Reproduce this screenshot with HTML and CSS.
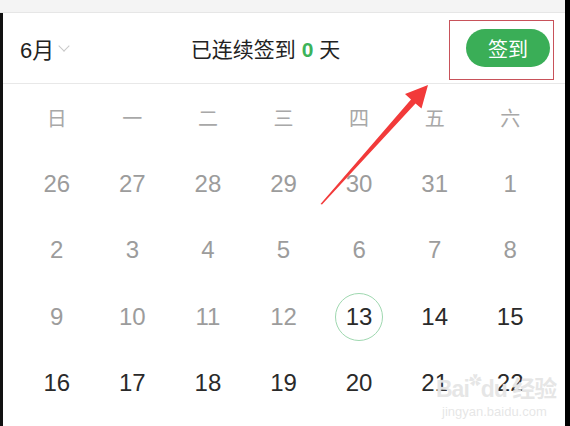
FILE: index.html
```html
<!DOCTYPE html>
<html lang="zh">
<head>
    <meta charset="UTF-8">
    <meta name="viewport" content="width=device-width, initial-scale=1.0">
    <title>签到日历</title>
    <link rel="stylesheet" href="styles.css">
</head>
<body>
    <div class="frame">
        <div class="topbar"></div>
        <div class="main">
            <div class="header">
                <div class="month">6月<span class="chevron"></span></div>
                <div class="title">已连续签到 <b class="count">0</b> 天</div>
                <button class="sign-btn">签到</button>
            </div>

            <div class="calendar">
                <div class="week">日</div>
                <div class="week">一</div>
                <div class="week">二</div>
                <div class="week">三</div>
                <div class="week">四</div>
                <div class="week">五</div>
                <div class="week">六</div>

                <div class="day past">26</div>
                <div class="day past">27</div>
                <div class="day past">28</div>
                <div class="day past">29</div>
                <div class="day past">30</div>
                <div class="day past">31</div>
                <div class="day past">1</div>

                <div class="day past">2</div>
                <div class="day past">3</div>
                <div class="day past">4</div>
                <div class="day past">5</div>
                <div class="day past">6</div>
                <div class="day past">7</div>
                <div class="day past">8</div>

                <div class="day past">9</div>
                <div class="day past">10</div>
                <div class="day past">11</div>
                <div class="day past">12</div>
                <div class="day"><span class="today">13</span></div>
                <div class="day">14</div>
                <div class="day">15</div>

                <div class="day">16</div>
                <div class="day">17</div>
                <div class="day">18</div>
                <div class="day">19</div>
                <div class="day">20</div>
                <div class="day">21</div>
                <div class="day">22</div>
            </div>
        </div>

        <!-- annotation overlays -->
        <div class="mark-box"></div>
        <svg class="arrow" width="570" height="426" viewBox="0 0 570 426">
            <polygon points="428,85 405,94 411,99.5 320.5,204 322,204.5 415.5,103.5 421.5,108.5" fill="#f23a3a"/>
        </svg>
        <div class="watermark">
            <div class="wm-logo">Bai<span class="paw">&#10047;</span>du 经验</div>
            <div class="wm-url">jingyan.baidu.com</div>
        </div>
    </div>
</body>
</html>
```

FILE: styles.css
```css
body {
    margin: 0;
    background: #fff;
    font-family: "Liberation Sans", Arial, "Noto Sans CJK SC", sans-serif;
}
.frame {
    position: relative;
    width: 570px;
    height: 426px;
    border-right: 5px solid #000;
    box-sizing: border-box;
    overflow: hidden;
}
.topbar {
    height: 12px;
    background: #f4f4f4;
    border-bottom: 1px solid #e6e6e6;
}
.main {
    border-left: 3px solid #111;
    height: 413px;
}
.header {
    display: flex;
    align-items: center;
    height: 70px;
    padding: 0 17px;
    border-bottom: 1px solid #e8e8e8;
}
.month {
    width: 53px;
    font-size: 22px;
    color: #222;
    display: flex;
    align-items: center;
}
.chevron {
    width: 7px;
    height: 7px;
    margin-left: 6px;
    margin-top: -5px;
    border-right: 1px solid #c8c8c8;
    border-bottom: 1px solid #c8c8c8;
    transform: rotate(45deg);
}
.title {
    flex: 1;
    text-align: center;
    font-size: 21px;
    color: #222;
    padding-right: 8px;
}
.count {
    color: #3cb35a;
}
.sign-btn {
    width: 84px;
    height: 38px;
    margin-right: -2px;
    border: none;
    border-radius: 19px;
    background: #3aae57;
    color: #fff;
    font-family: inherit;
    font-size: 20px;
    padding: 0;
}
.calendar {
    display: grid;
    grid-template-columns: repeat(7, 1fr);
    grid-auto-rows: 66.5px;
    padding: 0 17px 0 16px;
}
.week, .day {
    display: flex;
    align-items: center;
    justify-content: center;
}
.week {
    font-size: 20px;
    color: #a8a8a8;
}
.day {
    font-size: 24px;
    color: #2a2a2a;
}
.day.past {
    color: #9c9c9c;
}
.today {
    width: 46px;
    height: 46px;
    border: 1px solid #9fd8b0;
    border-radius: 50%;
    display: flex;
    align-items: center;
    justify-content: center;
}
.mark-box {
    position: absolute;
    left: 449px;
    top: 20px;
    width: 103px;
    height: 58px;
    border: 1px solid #c8525a;
}
.arrow {
    position: absolute;
    left: 0;
    top: 0;
}
.watermark {
    position: absolute;
    left: 436px;
    top: 370px;
    color: rgba(205, 205, 205, 0.5);
    text-shadow: 0 0 1px #fff;
    pointer-events: none;
}
.wm-logo {
    font-size: 23px;
    font-weight: bold;
    letter-spacing: -1px;
}
.paw {
    font-size: 13px;
    vertical-align: top;
}
.wm-url {
    font-size: 13px;
    margin-left: 6px;
}
```
